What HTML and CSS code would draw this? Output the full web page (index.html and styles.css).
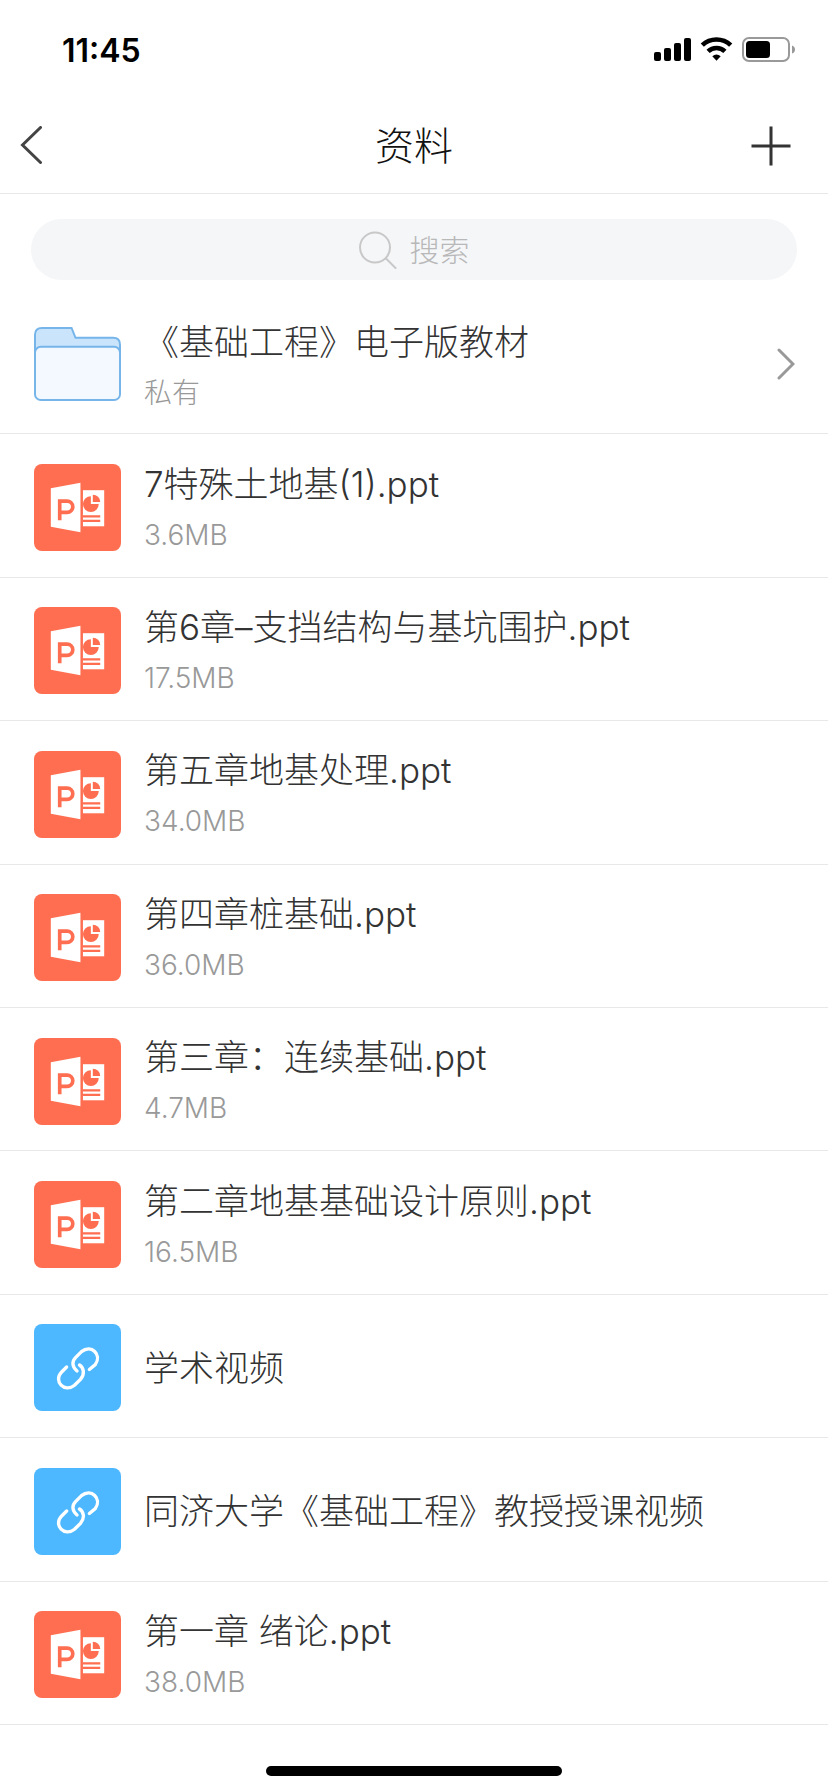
FILE: index.html
```html
<!DOCTYPE html>
<html lang="zh-CN">
<head>
<meta charset="utf-8">
<meta name="viewport" content="width=device-width, initial-scale=1">
<title>资料</title>
<link rel="stylesheet" href="styles.css">
</head>
<body>
<svg class="defs" aria-hidden="true">
  <symbol id="ppt" viewBox="0 0 88 88">
    <rect width="88" height="88" rx="8" fill="#ff6e50"/>
    <path d="M17 24.500 47 19V69L17 63.500Z" fill="#fff"/>
    <path d="M49.500 26.500H71V63H49.500Z" fill="#fff"/>
    <path d="M26 57V37.500H33.500A5.700 5.700 0 0 1 33.500 49H26" fill="none" stroke="#ff6e50" stroke-width="3.700"/>
    <path d="M57.500 32.500V40.500H65.500A8 8 0 1 1 57.500 32.500Z" fill="#ff6e50"/>
    <path d="M59.500 31A7.500 7.500 0 0 1 67 38.500H59.500Z" fill="#ff6e50"/>
    <path d="M49.500 53H67M49.500 57.500H67" stroke="#ff6e50" stroke-width="2.300"/>
  </symbol>
  <symbol id="link" viewBox="0 0 88 88">
    <rect width="88" height="88" rx="8" fill="#4db8ff"/>
    <g fill="none" stroke="#fff" stroke-width="3.400" stroke-linecap="round">
      <path d="M43.500 47.500C38 43 38.500 37.500 42 34L48 28C58 20 69 31 62 41L56 46"/>
      <path d="M33 43.500 28 48.500C19 58 31 70 41 62L47 56C52 50 50 44 46 41.500"/>
    </g>
  </symbol>
</svg>
<div class="app">
  <div class="status">
    <span class="time">11:45</span>
    <svg class="status-icons" viewBox="0 0 142 26" aria-hidden="true">
      <rect x="0" y="15" width="7" height="9" rx="2"/>
      <rect x="10" y="11" width="7" height="13" rx="2"/>
      <rect x="20" y="6" width="7" height="18" rx="2"/>
      <rect x="30" y="1" width="7" height="23" rx="2"/>
      <g fill="none" stroke="#000" stroke-width="4.600">
        <path d="M48.300 8.200A20.500 20.500 0 0 1 76.700 8.200"/>
        <path d="M54.100 14.400A12 12 0 0 1 70.900 14.400"/>
      </g>
      <path d="M58.300 19.200A6.500 6.500 0 0 1 66.700 19.200L62.500 23.800Z"/>
      <rect x="89" y="1" width="46" height="23" rx="6" fill="none" stroke="#999" stroke-width="2"/>
      <rect x="92" y="4" width="24" height="17" rx="3.500"/>
      <path d="M138 8.500Q141 9.500 141 12.500T138 16.500Z" fill="#999"/>
    </svg>
  </div>
  <header class="nav">
    <button class="nav-button" type="button" aria-label="返回">
      <svg class="back" viewBox="0 0 22 38" aria-hidden="true"><path d="M20.500 1.500 2.500 19 20.500 36.500"/></svg>
    </button>
    <h1 class="title">资料</h1>
    <button class="nav-button nav-add" type="button" aria-label="添加">
      <svg class="plus" viewBox="0 0 40 40" aria-hidden="true"><path d="M20 0.500V39.500M0.500 20H39.500"/></svg>
    </button>
  </header>
  <main class="content">
    <div class="search-area">
      <label class="search">
        <svg class="search-icon" viewBox="0 0 38 38" aria-hidden="true"><circle cx="16" cy="16.500" r="15"/><path d="M27 27.500 36.500 37"/></svg>
        <input class="search-input" type="text" placeholder="搜索" aria-label="搜索">
      </label>
    </div>
    <ul class="list">
      <li class="row"><a class="item" href="#">
        <svg class="icon" viewBox="0 0 88 88" aria-hidden="true">
          <g stroke="#76b5ea" stroke-width="2">
            <path d="M1 68V14Q1 7 8 7H38L42 17H80Q87 17 87 24V68Z" fill="#cae5fb"/>
            <rect x="1" y="26" width="86" height="54" rx="6" fill="#f4f8ff"/>
          </g>
        </svg>
        <span class="text text-folder"><span class="name">《基础工程》电子版教材</span><span class="meta">私有</span></span>
        <svg class="chevron" viewBox="0 0 18 32" aria-hidden="true"><path d="M2 2 16 16 2 30"/></svg>
      </a></li>
      <li class="row"><a class="item" href="#"><svg class="icon" aria-hidden="true"><use href="#ppt"/></svg><span class="text"><span class="name">7特殊土地基(1).ppt</span><span class="meta">3.6MB</span></span></a></li>
      <li class="row"><a class="item" href="#"><svg class="icon" aria-hidden="true"><use href="#ppt"/></svg><span class="text"><span class="name">第6章–支挡结构与基坑围护.ppt</span><span class="meta">17.5MB</span></span></a></li>
      <li class="row"><a class="item" href="#"><svg class="icon" aria-hidden="true"><use href="#ppt"/></svg><span class="text"><span class="name">第五章地基处理.ppt</span><span class="meta">34.0MB</span></span></a></li>
      <li class="row"><a class="item" href="#"><svg class="icon" aria-hidden="true"><use href="#ppt"/></svg><span class="text"><span class="name">第四章桩基础.ppt</span><span class="meta">36.0MB</span></span></a></li>
      <li class="row"><a class="item" href="#"><svg class="icon" aria-hidden="true"><use href="#ppt"/></svg><span class="text"><span class="name">第三章：连续基础.ppt</span><span class="meta">4.7MB</span></span></a></li>
      <li class="row"><a class="item" href="#"><svg class="icon" aria-hidden="true"><use href="#ppt"/></svg><span class="text"><span class="name">第二章地基基础设计原则.ppt</span><span class="meta">16.5MB</span></span></a></li>
      <li class="row"><a class="item" href="#"><svg class="icon" aria-hidden="true"><use href="#link"/></svg><span class="text"><span class="name">学术视频</span></span></a></li>
      <li class="row"><a class="item" href="#"><svg class="icon" aria-hidden="true"><use href="#link"/></svg><span class="text"><span class="name">同济大学《基础工程》教授授课视频</span></span></a></li>
      <li class="row"><a class="item" href="#"><svg class="icon" aria-hidden="true"><use href="#ppt"/></svg><span class="text"><span class="name">第一章 绪论.ppt</span><span class="meta">38.0MB</span></span></a></li>
    </ul>
  </main>
  <footer class="home"><div class="home-bar"></div></footer>
</div>
</body>
</html>
```
FILE: styles.css
```css
* {
  box-sizing: border-box;
}

body {
  margin: 0;
  background: #fff;
  color: #333;
  font-family: Inter, "Noto Sans CJK SC", sans-serif;
  font-weight: 300;
}

.defs {
  display: none;
}

.app {
  display: flex;
  flex-direction: column;
  min-height: 100vh;
}

.status {
  display: flex;
  align-items: center;
  justify-content: space-between;
  height: 100px;
  padding: 0 32px 0 62px;
}

.time {
  color: #000;
  font-size: 32px;
  font-weight: 600;
}

.status-icons {
  width: 142px;
  height: 26px;
}

.nav {
  display: grid;
  grid-template-columns: 80px 1fr 80px;
  align-items: center;
  height: 94px;
  padding-bottom: 2px;
  border-bottom: 1px solid #e8e8e8;
}

.nav-button {
  display: flex;
  align-items: center;
  height: 80px;
  padding: 0 20px 2px;
  border: 0;
  background: none;
}

.nav-add {
  justify-content: flex-end;
  padding: 0 37px 0 0;
}

.back {
  width: 22px;
  height: 38px;
  fill: none;
  stroke: #444;
  stroke-width: 3;
  stroke-linecap: round;
}

.plus {
  flex: none;
  width: 40px;
  height: 40px;
  fill: none;
  stroke: #333;
  stroke-width: 3;
}

.title {
  margin: 0;
  color: #111;
  font-size: 39px;
  font-weight: 300;
  line-height: 56px;
  text-align: center;
}

.content {
  display: flex;
  flex: 1;
  flex-direction: column;
}

.search-area {
  padding: 25px 31px 11px;
}

.search {
  display: flex;
  align-items: center;
  justify-content: center;
  gap: 13px;
  height: 61px;
  border-radius: 31px;
  background: #f5f6f8;
}

.search-icon {
  width: 38px;
  height: 38px;
  fill: none;
  stroke: #c8c8c8;
  stroke-width: 2;
  stroke-linecap: round;
}

.search-input {
  width: 60px;
  padding: 0;
  border: 0;
  outline: 0;
  background: none;
  color: #333;
  font: inherit;
  font-size: 30px;
}

.search-input::placeholder {
  color: #b8b8b8;
  opacity: 1;
}

.list {
  display: grid;
  flex: 1;
  grid-auto-rows: 1fr;
  margin: 0;
  padding: 0;
  list-style: none;
}

.row {
  display: grid;
  border-bottom: 1px solid #e8e8e8;
}

.item {
  display: flex;
  align-items: center;
  gap: 23px;
  padding: 4px 33px 0 34px;
  color: inherit;
  text-decoration: none;
}

.icon {
  flex: none;
  width: 87px;
  height: 87px;
}

.text {
  display: flex;
  flex: 1;
  flex-direction: column;
  gap: 4px;
}

.text-folder {
  padding-top: 4px;
}

.name {
  font-size: 35px;
  line-height: 50px;
}

.meta {
  color: #999;
  font-size: 28px;
  line-height: 44px;
}

.chevron {
  width: 18px;
  height: 32px;
  fill: none;
  stroke: #999;
  stroke-width: 3;
  stroke-linecap: round;
}

.home {
  display: flex;
  justify-content: center;
  height: 67px;
  padding-top: 41px;
}

.home-bar {
  width: 296px;
  height: 10px;
  border-radius: 5px;
  background: #000;
}
```
